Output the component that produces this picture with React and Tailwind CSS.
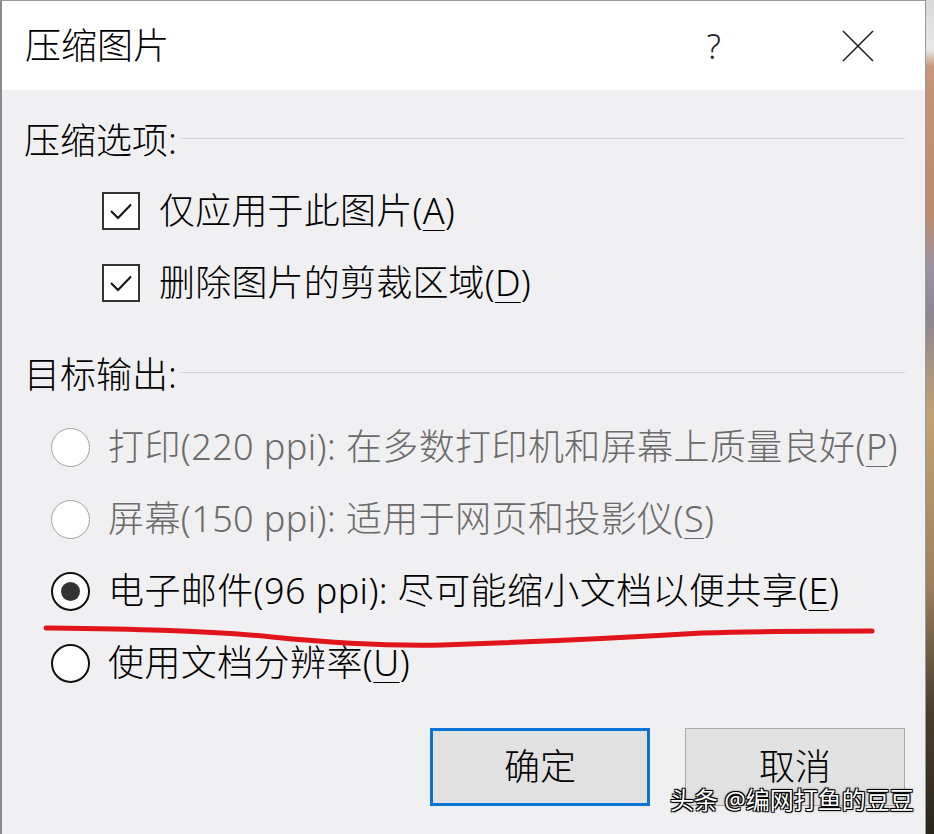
import React from 'react';

const font = { fontFamily: '"Noto Sans", "Noto Sans CJK SC", sans-serif' };

const Mn = ({ children }) => <span className="underline decoration-1 underline-offset-[6px]">{children}</span>;

const CheckRow = ({ label, mn }) => (
  <div className="flex h-[72px] items-center pl-[100px]">
    <div className="flex h-[38px] w-[38px] items-center justify-center border-2 border-[#333] bg-white">
      <svg width="30" height="30" viewBox="0 0 30 30" fill="none">
        <path d="M5 15l7 7L25 8.5" stroke="#111" strokeWidth="2" />
      </svg>
    </div>
    <span className="ml-[19px] text-[36px] font-light leading-none tracking-[0.2px] text-black">
      {label}(<Mn>{mn}</Mn>)
    </span>
  </div>
);

const RadioRow = ({ label, mn, disabled, checked }) => (
  <div className="flex h-[72px] items-center pl-[49px]">
    <div
      className={
        disabled
          ? 'flex h-[39px] w-[39px] items-center justify-center rounded-full border border-[#a3a3a3] bg-white'
          : 'flex h-[39px] w-[39px] items-center justify-center rounded-full border-2 border-[#111] bg-white'
      }
    >
      {checked && <div className="h-[19px] w-[19px] rounded-full bg-[#333]" />}
    </div>
    <span
      className={
        disabled
          ? 'ml-[18px] text-[36px] font-light leading-none tracking-[0.4px] text-[#6b6b6b]'
          : 'ml-[18px] text-[36px] font-light leading-none tracking-[0.4px] text-black'
      }
    >
      {label}(<Mn>{mn}</Mn>)
    </span>
  </div>
);

const Heading = ({ children }) => (
  <div className="flex h-[42px] items-center pl-[22px] pr-[20px]">
    <span className="text-[36px] font-light leading-none text-black">{children}</span>
    <div className="ml-[4px] mb-[6px] h-px flex-1 bg-[#d6d4d6]" />
  </div>
);

export default function App() {
  return (
    <div className="flex h-[834px] w-[934px] overflow-hidden bg-[#efeef0]" style={font}>
      <div className="relative flex w-[926px] flex-col border-l-2 border-r border-t border-l-[#8a8a8a] border-r-[#9a9a9a] border-t-[#9a9a9a] bg-[#f0eff1]">
        {/* title bar */}
        <div className="flex h-[89px] items-center bg-white pl-[23px]">
          <span className="text-[36px] font-light leading-none text-black">压缩图片</span>
          <span className="ml-auto text-[34px] font-light leading-none text-[#222]">?</span>
          <svg className="ml-[121px] mr-[51px]" width="32" height="32" viewBox="0 0 32 32">
            <path d="M1 1L31 31M31 1L1 31" stroke="#222" strokeWidth="1.6" />
          </svg>
        </div>

        {/* body */}
        <div className="flex flex-col pt-[30px]">
          <Heading>压缩选项:</Heading>
          <div className="mt-[13px]">
            <CheckRow label="仅应用于此图片" mn="A" />
            <CheckRow label="删除图片的剪裁区域" mn="D" />
          </div>
          <div className="mt-[35px]">
            <Heading>目标输出:</Heading>
          </div>
          <div className="mt-[15px]">
            <RadioRow label="打印(220 ppi): 在多数打印机和屏幕上质量良好" mn="P" disabled />
            <RadioRow label="屏幕(150 ppi): 适用于网页和投影仪" mn="S" disabled />
            <RadioRow label="电子邮件(96 ppi): 尽可能缩小文档以便共享" mn="E" checked />
            <RadioRow label="使用文档分辨率" mn="U" />
          </div>
          <div className="mt-[29px] flex justify-end gap-[35px] pr-[20px]">
            <button className="flex h-[78px] w-[220px] items-center justify-center border-[3px] border-[#0a74d4] bg-[#e1e1e1] text-[36px] font-light text-black">
              确定
            </button>
            <button className="flex h-[78px] w-[220px] items-center justify-center border border-[#a8a8a8] bg-[#e1e1e1] text-[36px] font-light text-black">
              取消
            </button>
          </div>
        </div>

        {/* hand-drawn red underline annotation */}
        <svg className="pointer-events-none absolute left-0 top-[618px]" width="926" height="34" viewBox="0 0 926 34">
          <path
            d="M44 9 C120 10 200 11 270 18 C330 24 390 27 440 26 C560 22 650 17 700 14 C760 12 820 12 870 12"
            stroke="#e0141a"
            strokeWidth="5"
            strokeLinecap="round"
            fill="none"
          />
        </svg>

        {/* watermark */}
        <span className="pointer-events-none absolute left-[668px] top-[787px] text-[24px] leading-none text-white [text-shadow:1px_1px_0_#000,-1px_-1px_0_#000,1px_-1px_0_#000,-1px_1px_0_#000,0_0_3px_#000]">
          头条 @编网打鱼的豆豆
        </span>
      </div>
      <div className="w-[8px] bg-[linear-gradient(to_bottom,#d9d9d9_0%,#e8e8e8_6%,#c6957a_8%,#b98b70_26%,#9a92a2_32%,#8e8792_38%,#c1a274_50%,#9d8060_70%,#4a3f30_85%,#2a241c_100%)]" />
    </div>
  );
}
